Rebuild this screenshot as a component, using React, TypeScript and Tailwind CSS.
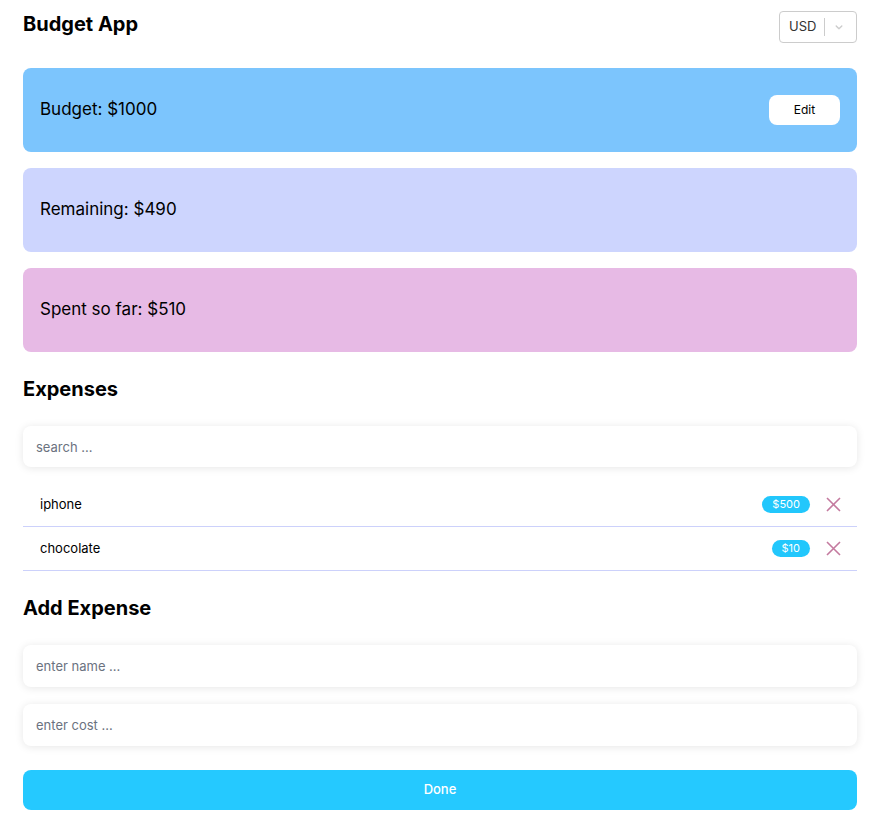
import { useState } from "react";

type Expense = { id: number; name: string; cost: number };

export default function App() {
  const [expenses] = useState<Expense[]>([
    { id: 1, name: "iphone", cost: 500 },
    { id: 2, name: "chocolate", cost: 10 },
  ]);
  const budget = 1000;
  const spent = expenses.reduce((s, e) => s + e.cost, 0);

  return (
    <div className="min-h-screen bg-white text-black" style={{ fontFamily: "Inter, 'Liberation Sans', sans-serif" }}>
      <div className="w-[834px] ml-[23px] pb-6">
        {/* header */}
        <div className="flex items-start justify-between pt-[11px]">
          <h1 className="text-[20px] font-bold leading-[24px] pt-[1px]">Budget App</h1>
          <div className="flex items-center h-[32px] w-[78px] border border-[#cccccc] rounded-[4px] bg-white">
            <span className="pl-[9px] text-[13px] text-[#333]">USD</span>
            <span className="ml-[8px] h-[18px] w-px bg-[#cccccc]" />
            <svg className="ml-[8px]" width="12" height="12" viewBox="0 0 20 20" fill="#cccccc">
              <path d="M4.516 7.548c0.436-0.446 1.043-0.481 1.576 0l3.908 3.747 3.908-3.747c0.533-0.481 1.141-0.446 1.574 0 0.436 0.445 0.408 1.197 0 1.615-0.406 0.418-4.695 4.502-4.695 4.502-0.217 0.223-0.502 0.335-0.787 0.335s-0.57-0.112-0.789-0.335c0 0-4.287-4.084-4.695-4.502s-0.436-1.17 0-1.615z" />
            </svg>
          </div>
        </div>

        {/* cards */}
        <div className="mt-[25px] flex flex-col gap-4">
          <div className="h-[84px] rounded-lg bg-[#7cc5fd] flex items-center justify-between px-[17px]">
            <span className="text-[17px]">Budget: ${budget}</span>
            <button className="h-[30px] w-[71px] rounded-lg bg-white text-[12px]">Edit</button>
          </div>
          <div className="h-[84px] rounded-lg bg-[#cdd5fe] flex items-center px-[17px]">
            <span className="text-[17px]">Remaining: ${budget - spent}</span>
          </div>
          <div className="h-[84px] rounded-lg bg-[#e7bae5] flex items-center px-[17px]">
            <span className="text-[17px]">Spent so far: ${spent}</span>
          </div>
        </div>

        {/* expenses */}
        <h2 className="mt-[25px] text-[20px] font-bold leading-[24px]">Expenses</h2>
        <input
          placeholder="search ..."
          className="mt-[25px] w-full h-[41px] rounded-lg bg-white px-[13px] text-[13px] shadow-[0_1px_8px_rgba(0,0,0,0.1)] outline-none placeholder:text-[#6b7280]"
        />
        <ul className="mt-[16px]">
          {expenses.map((e) => (
            <li key={e.id} className="h-[44px] flex items-center justify-between pl-[17px] pr-[16px] border-b border-solid border-[#ccd1fb] text-[13px]">
              <span>{e.name}</span>
              <div className="flex items-center gap-[16px]">
                <span className="rounded-full bg-[#22c7fc] text-white text-[11px] leading-[17px] px-[10px]">${e.cost}</span>
                <svg width="15" height="15" viewBox="0 0 15 15" stroke="#c47a9f" strokeWidth="1.6">
                  <path d="M1 1L14 14M14 1L1 14" />
                </svg>
              </div>
            </li>
          ))}
        </ul>

        {/* add expense */}
        <h2 className="mt-[25px] text-[20px] font-bold leading-[24px]">Add Expense</h2>
        <div className="mt-[25px] flex flex-col gap-[17px]">
          <input
            placeholder="enter name ..."
            className="w-full h-[42px] rounded-lg bg-white px-[13px] text-[13px] shadow-[0_1px_8px_rgba(0,0,0,0.1)] outline-none placeholder:text-[#6b7280]"
          />
          <input
            placeholder="enter cost ..."
            className="w-full h-[42px] rounded-lg bg-white px-[13px] text-[13px] shadow-[0_1px_8px_rgba(0,0,0,0.1)] outline-none placeholder:text-[#6b7280]"
          />
        </div>
        <button className="mt-[24px] w-full h-[40px] rounded-lg bg-[#25c9ff] text-white text-[13px] font-medium">Done</button>
      </div>
    </div>
  );
}
